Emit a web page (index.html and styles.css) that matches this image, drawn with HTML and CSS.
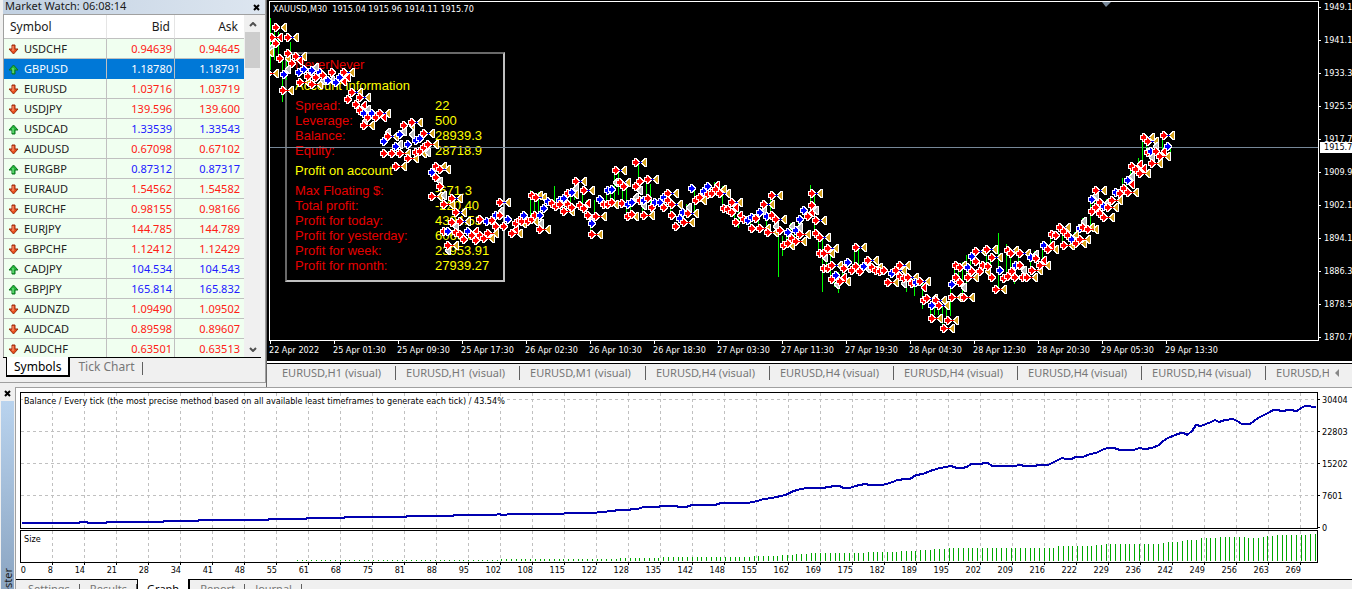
FILE: index.html
```html
<!DOCTYPE html>
<html lang="en">
<head>
    <meta charset="UTF-8">
    <meta name="viewport" content="width=device-width, initial-scale=1.0">
    <title>Strategy Tester</title>
    <link rel="stylesheet" href="styles.css">
</head>
<body>
    <svg class="defs" aria-hidden="true">
        <symbol id="arrow-down" viewBox="0 0 11 11">
            <path d="M4 1h3v4h3L5.500 10 1 5h3z" fill="#e8501e" stroke="#9c2a0c"/>
            <path d="M5 2v5" stroke="#ffa584"/>
        </symbol>
        <symbol id="arrow-up" viewBox="0 0 11 11">
            <path d="M4 10h3V6h3L5.500 1 1 6h3z" fill="#22b83a" stroke="#0b7420"/>
            <path d="M5 4v5" stroke="#8df09c"/>
        </symbol>
    </svg>

    <div class="workspace">
        <section class="market">
            <div class="market-title">
                <span>Market Watch: 06:08:14</span>
                <button type="button" class="close" aria-label="Close Market Watch"><svg viewBox="0 0 7 7"><path d="M1 1l5 5M6 1L1 6"/></svg></button>
            </div>
            <div class="market-body">
                <div class="quotes">
                    <table>
                        <thead>
                            <tr><th>Symbol</th><th>Bid</th><th>Ask</th></tr>
                        </thead>
                        <tbody id="quotes"></tbody>
                    </table>
                </div>
                <div class="scrollbar">
                    <svg viewBox="0 0 8 5"><path d="M1 4l3-3 3 3"/></svg>
                    <div class="thumb"></div>
                    <svg viewBox="0 0 8 5"><path d="M1 1l3 3 3-3"/></svg>
                </div>
            </div>
            <div class="tabs market-tabs">
                <button type="button" class="active">Symbols</button>
                <button type="button">Tick Chart</button>
            </div>
        </section>

        <section class="chart">
            <div class="chart-main">
                <div class="plot">
                    <div class="plot-title">XAUUSD,M30&nbsp; 1915.04 1915.96 1914.11 1915.70</div>
                    <div class="info">
                        <p class="name">NeverNever</p>
                        <p class="heading">Account information</p>
                        <dl>
                            <dt>Spread:</dt><dd>22</dd>
                            <dt>Leverage:</dt><dd>500</dd>
                            <dt>Balance:</dt><dd>28939.3</dd>
                            <dt>Equity:</dt><dd>28718.9</dd>
                        </dl>
                        <p class="heading">Profit on account</p>
                        <dl>
                            <dt>Max Floating $:</dt><dd>-671.3</dd>
                            <dt>Total profit:</dt><dd>-220.40</dd>
                            <dt>Profit for today:</dt><dd>4394.53</dd>
                            <dt>Profit for yesterday:</dt><dd>6066.58</dd>
                            <dt>Profit for week:</dt><dd>23953.91</dd>
                            <dt>Profit for month:</dt><dd>27939.27</dd>
                        </dl>
                    </div>
                    <svg id="trades" class="layer"></svg>
                </div>
                <div class="price-axis">
                    <span>1949.1</span><span>1941.1</span><span>1933.3</span><span>1925.5</span><span>1917.7</span><span>1909.9</span><span>1902.1</span><span>1894.1</span><span>1886.3</span><span>1878.5</span><span>1870.7</span>
                    <b>1915.7</b>
                </div>
            </div>
            <div class="time-axis" id="time-axis"></div>
            <div class="chart-tabs">
                <div class="tab-strip">
                    <button type="button">EURUSD,H1 (visual)</button>
                    <button type="button">EURUSD,H1 (visual)</button>
                    <button type="button">EURUSD,M1 (visual)</button>
                    <button type="button">EURUSD,H4 (visual)</button>
                    <button type="button">EURUSD,H4 (visual)</button>
                    <button type="button">EURUSD,H4 (visual)</button>
                    <button type="button">EURUSD,H4 (visual)</button>
                    <button type="button">EURUSD,H4 (visual)</button>
                    <button type="button">EURUSD,H4 (visual)</button>
                </div>
                <button type="button" class="scroll-left" aria-label="Scroll tabs left"><svg viewBox="0 0 4 8"><path d="M4 0v8L0 4z"/></svg></button>
            </div>
        </section>
    </div>

    <section class="tester">
        <div class="tester-side">
            <button type="button" class="close" aria-label="Close Tester"><svg viewBox="0 0 7 7"><path d="M1 1l5 5M6 1L1 6"/></svg></button>
            <div class="tester-name"><span>Tester</span></div>
        </div>
        <div class="tester-main">
            <div class="graph">
                <div class="graph-plots">
                    <div class="balance">
                        <svg id="balance"></svg>
                        <span class="graph-label">Balance / Every tick (the most precise method based on all available least timeframes to generate each tick) / 43.54%</span>
                    </div>
                    <div class="size">
                        <svg id="size"></svg>
                        <span class="graph-label">Size</span>
                    </div>
                    <div class="trade-axis" id="trade-axis"></div>
                </div>
                <div class="money-axis"><span>30404</span><span>22803</span><span>15202</span><span>7601</span><span>0</span></div>
            </div>
            <div class="tabs tester-tabs">
                <button type="button">Settings</button>
                <button type="button">Results</button>
                <button type="button" class="active">Graph</button>
                <button type="button">Report</button>
                <button type="button">Journal</button>
            </div>
        </div>
    </section>
    <script src="script.js"></script>
</body>
</html>
```
FILE: styles.css
```css
* {
    box-sizing: border-box;
}
body {
    margin: 0;
    height: 100vh;
    display: flex;
    flex-direction: column;
    overflow: hidden;
    background: #f0f0f0;
    color: #1a1a1a;
    font: 11px/14px "Noto Sans", "Open Sans", sans-serif;
}
button {
    margin: 0;
    padding: 0;
    border: 0;
    background: none;
    color: inherit;
    font: inherit;
    white-space: nowrap;
}
.defs {
    display: none;
}
.workspace {
    display: flex;
    height: 387px;
    flex: none;
}

/* market watch */
.market {
    width: 266px;
    height: 383px;
    flex: none;
    display: flex;
    flex-direction: column;
    padding-left: 3px;
    border-right: 1px solid #a0a0a0;
    border-bottom: 1px solid #a0a0a0;
}
.market-title {
    height: 14px;
    line-height: 11px;
    display: flex;
    justify-content: space-between;
    padding: 0 5px 0 2px;
    background: linear-gradient(90deg, #c2d1e2, #dde6f0);
}
.close svg {
    display: block;
    width: 7px;
    height: 7px;
    stroke: #000;
    stroke-width: 2;
}
.market-body {
    display: flex;
    height: 343px;
    border-top: 1px solid #a0a0a0;
    border-left: 1px solid #a0a0a0;
}
.quotes {
    width: 240px;
    overflow: hidden;
}
table {
    width: 100%;
    border-collapse: separate;
    border-spacing: 0;
    table-layout: fixed;
    background: #f0fff0;
}
th {
    height: 24px;
    padding: 0 6px;
    background: #fff;
    border-right: 1px solid #e5e5e5;
    border-bottom: 1px solid #c0c0c0;
    font-weight: normal;
    font-size: 12px;
    text-align: right;
}
th:first-child {
    width: 103px;
    text-align: left;
}
th:nth-child(2) {
    width: 68px;
    padding-right: 4px;
}
td {
    height: 20px;
    padding: 0 2px 0 4px;
    border-right: 1px solid #c0c0c0;
    border-bottom: 1px solid #c0c0c0;
    text-align: right;
}
td:first-child {
    text-align: left;
}
th:last-child,
td:last-child {
    border-right: 0;
}
td:last-child {
    padding-right: 4px;
}
td svg {
    width: 11px;
    height: 11px;
    margin-right: 5px;
    vertical-align: -2px;
}
.down td {
    color: #ff2015;
}
.up td {
    color: #2020ff;
}
.down td:first-child,
.up td:first-child {
    color: #222;
}
tr.selected td,
tr.selected td:first-child {
    background: #0078d7;
    border-bottom-color: #0078d7;
    color: #fff;
}
.scrollbar {
    width: 17px;
    display: flex;
    flex-direction: column;
    align-items: center;
    padding: 7px 0 5px;
}
.scrollbar svg {
    width: 8px;
    height: 5px;
    fill: none;
    stroke: #505050;
    stroke-width: 2;
}
.scrollbar .thumb {
    width: 15px;
    height: 36px;
    margin: 5px 0 auto;
    background: #cdcdcd;
}
.tabs {
    display: flex;
    border-top: 1px solid #000;
    color: #777;
}
.tabs button {
    height: 18px;
    padding: 0 10px;
    position: relative;
}
.tabs button:not(.active)::after {
    content: "";
    position: absolute;
    right: 0;
    top: 4px;
    height: 13px;
    border-right: 1px solid #606060;
}
.tabs .active {
    height: 20px;
    margin-top: -1px;
    padding: 1px 9px 0;
    background: #fff;
    border: 1px solid #000;
    border-top: 0;
    border-right-width: 2px;
    border-bottom-width: 2px;
    color: #000;
}
.market-tabs {
    margin-right: 4px;
    padding-left: 3px;
    font-size: 12px;
}
.market-tabs button {
    padding: 0 8px;
}
.market-tabs .active {
    padding: 1px 7px 0;
}

/* price chart */
.chart {
    flex: 1;
    min-width: 0;
    border-left: 1px solid #696969;
    background: #000;
    color: #fff;
    font: 9px/11px "DejaVu Sans Condensed", "DejaVu Sans", sans-serif;
}
.chart-main {
    display: flex;
    height: 341px;
    padding: 1px 0 0 2px;
}
.plot {
    position: relative;
    flex: 1;
    border: 1px solid #fff;
}
.plot-title {
    padding: 2px 0 0 3px;
}
.layer {
    position: absolute;
    left: 0;
    top: 0;
    width: 100%;
    height: 100%;
}
.info {
    position: absolute;
    left: 15px;
    top: 50px;
    width: 220px;
    height: 230px;
    padding: 3px 8px;
    border: 2px solid #c0c0c0;
    border-top-color: #696969;
    border-left-color: #696969;
    font: 13px/15px "Liberation Sans", Arial, sans-serif;
}
.info p {
    margin: 0 0 6px;
}
.info p.heading {
    margin-bottom: 5px;
    color: #ff0;
}
.info .name,
.info dt {
    color: #e60000;
}
.info dl {
    display: grid;
    grid-template-columns: 140px 1fr;
    margin: 0 0 5px;
}
.info dd {
    margin: 0;
    color: #ff0;
}
.price-axis {
    position: relative;
    width: 33px;
    display: flex;
    flex-direction: column;
    gap: 22px;
    padding-top: 1px;
    overflow: hidden;
}
.price-axis span {
    padding-left: 5px;
    background: linear-gradient(#fff, #fff) 0 5px / 2px 1px no-repeat;
}
.price-axis b {
    position: absolute;
    top: 141px;
    left: 1px;
    width: 100%;
    padding-left: 4px;
    background: #fff;
    color: #000;
    font-weight: normal;
}
.time-axis {
    display: flex;
    height: 20px;
    padding-left: 2px;
}
.time-axis span {
    width: 64px;
    flex: none;
    padding-top: 4px;
    white-space: nowrap;
    background: linear-gradient(#fff, #fff) 1px 0 / 1px 3px no-repeat;
}
.chart-tabs {
    display: flex;
    align-items: center;
    height: 26px;
    padding: 0 13px 4px 5px;
    border-top: 2px solid #fff;
    background: #f0f0f0;
    box-shadow: inset 0 1px #000;
    color: #777;
    font: 11px/14px "Noto Sans", "Open Sans", sans-serif;
}
.tab-strip {
    display: flex;
    flex: 1;
    overflow: hidden;
}
.tab-strip button {
    flex: none;
    padding: 0 14px 0 10px;
    border-right: 1px solid #606060;
}
.scroll-left svg {
    display: block;
    width: 4px;
    height: 8px;
    margin-left: 6px;
    fill: #888;
}

/* strategy tester */
.tester {
    flex: 1;
    min-height: 0;
    display: flex;
}
.tester-side {
    width: 15px;
    flex: none;
    display: flex;
    flex-direction: column;
    align-items: center;
    padding-top: 3px;
}
.tester-name {
    width: 13px;
    flex: 1;
    margin-top: 4px;
    padding-top: 167px;
    overflow: hidden;
    background: linear-gradient(#b9d3ee, #8ba5c2);
}
.tester-name span {
    writing-mode: vertical-rl;
    transform: rotate(180deg);
    line-height: 13px;
}
.tester-main {
    flex: 1;
    min-width: 0;
    border-top: 1px solid #a0a0a0;
    border-left: 1px solid #a0a0a0;
}
.graph {
    display: flex;
    height: 191px;
    padding: 4px 0 0 4px;
    background: #fff;
    color: #000;
    font: 9px/11px "DejaVu Sans Condensed", "DejaVu Sans", sans-serif;
}
.graph-plots {
    flex: 1;
    min-width: 0;
}
.balance,
.size {
    position: relative;
    border: 1px solid #000;
}
.balance {
    height: 137px;
}
.size {
    height: 33px;
    margin-top: 1px;
}
.graph-plots svg {
    display: block;
    width: 100%;
    height: 100%;
}
.graph-label {
    position: absolute;
    left: 2px;
    top: 3px;
    padding: 0 1px;
    background: #fff;
}
.trade-axis {
    display: flex;
    text-align: right;
}
.trade-axis span {
    width: 32px;
    flex: none;
    padding-top: 2px;
    background: linear-gradient(#000, #000) 100% 0 / 1px 2px no-repeat;
}
.trade-axis span:first-child {
    width: 6px;
    background: none;
}
.trade-axis span:nth-child(2) {
    width: 27px;
}
.money-axis {
    width: 34px;
    display: flex;
    flex-direction: column;
    gap: 21px;
    padding-top: 3px;
}
.money-axis span {
    padding-left: 4px;
    background: linear-gradient(#000, #000) 0 4px / 2px 1px no-repeat;
}
.tester-tabs {
    padding-left: 2px;
}
```
FILE: script.js
```js
const SVG_NS = 'http://www.w3.org/2000/svg';

const quotes = [
    ['USDCHF', '0.94639', '0.94645', 'down'],
    ['GBPUSD', '1.18780', '1.18791', 'up'],
    ['EURUSD', '1.03716', '1.03719', 'down'],
    ['USDJPY', '139.596', '139.600', 'down'],
    ['USDCAD', '1.33539', '1.33543', 'up'],
    ['AUDUSD', '0.67098', '0.67102', 'down'],
    ['EURGBP', '0.87312', '0.87317', 'up'],
    ['EURAUD', '1.54562', '1.54582', 'down'],
    ['EURCHF', '0.98155', '0.98166', 'down'],
    ['EURJPY', '144.785', '144.789', 'down'],
    ['GBPCHF', '1.12412', '1.12429', 'down'],
    ['CADJPY', '104.534', '104.543', 'up'],
    ['GBPJPY', '165.814', '165.832', 'up'],
    ['AUDNZD', '1.09490', '1.09502', 'down'],
    ['AUDCAD', '0.89598', '0.89607', 'down'],
    ['AUDCHF', '0.63501', '0.63513', 'down']
];

document.getElementById('quotes').innerHTML = quotes.map(([symbol, bid, ask, dir]) =>
    `<tr class="${dir}${symbol === 'GBPUSD' ? ' selected' : ''}">
        <td><svg><use href="#arrow-${dir}"/></svg>${symbol}</td><td>${bid}</td><td>${ask}</td>
    </tr>`).join('');

const times = ['22 Apr 2022', '25 Apr 01:30', '25 Apr 09:30', '25 Apr 17:30', '26 Apr 02:30',
    '26 Apr 10:30', '26 Apr 18:30', '27 Apr 03:30', '27 Apr 11:30', '27 Apr 19:30', '28 Apr 04:30',
    '28 Apr 12:30', '28 Apr 20:30', '29 Apr 05:30', '29 Apr 13:30'];
document.getElementById('time-axis').innerHTML = times.map(t => `<span>${t}</span>`).join('');

const tradeNumbers = [0, 8, 14, 21, 28, 34, 41, 48, 55, 61, 68, 75, 81, 88, 95, 102, 108, 115, 122,
    128, 135, 142, 148, 155, 162, 169, 175, 182, 189, 195, 202, 209, 216, 222, 229, 236, 242, 249,
    256, 263, 269];
document.getElementById('trade-axis').innerHTML = tradeNumbers.map(n => `<span>${n}</span>`).join('');

function add(parent, name, attrs) {
    const el = document.createElementNS(SVG_NS, name);
    for (const key in attrs) {
        el.setAttribute(key, attrs[key]);
    }
    parent.appendChild(el);
    return el;
}

// Chart origin, so that the data below can use workspace coordinates
function layer(id, x, y) {
    return add(document.getElementById(id), 'g', { transform: `translate(${-x} ${-y})` });
}

// r / b: sell and buy entry, g / s / l: exits,
// p / q: entry joined to its exit by a blue / red line
const trades = `
q272,37 r276,27 g284,27 l280,37 r276,43 s271,48 g271,52 p288,37 r280,58 g288,58 r288,53 p296,56 l300,60 r292,63
q268,73 b284,74 s288,69 q283,90 b299,72 b304,69 b312,70 q300,82 r308,76 s316,67 r316,77 b320,72 q312,84
r323,75 s323,80 b328,80 r332,72 s332,80 b336,82 b340,77 p344,72 l348,77 l344,81
p352,92 r348,99 p360,97 r356,104 l364,105 r360,110 s368,109 b364,113 b372,113 r368,117 r376,117 p380,113
l384,117 s365,121 q364,125 r404,125 p412,122 g412,125 s388,132 p388,136 b384,141 b400,134 s404,131 s412,134
b396,146 s400,144 b408,144 b416,140 b420,138 p424,133 q428,144 r384,153 r392,153 q400,153 r416,152 r420,151
r424,147 g424,153 s428,152 q408,158 q396,166
p436,166 p440,169 b432,172 r436,177 s440,181 r440,186 q432,196 s444,195 p452,198 q444,204 p456,212
r452,222 p460,221 s456,226 r444,231 b448,231 r456,232 r460,234 b468,231 r464,239 l476,231 r472,235
r476,240 r480,235 q484,238 q488,233 q448,245 s448,250 r480,219 b487,221 r492,220 b496,215 s501,211 r500,215
p500,202 r496,226 r504,226 b508,219 q512,233 r516,223 l516,229 r520,220 b524,215 g524,223
r522,221 q528,221 r532,195 g540,195 p536,197 r532,219 r535,215 b540,215 b544,208 s541,223 q540,229
b548,201 r552,203 r556,206 b560,200 r560,204 b564,198 q564,211 r568,193 r568,204 b572,192 r572,207
p576,181 s576,188 g576,194 p584,190 r580,205 r584,208 l588,203 r588,215 s592,219 b592,223 q596,216 q592,234
b600,199 r604,204 b608,190 r608,204 b612,189 r612,202 g616,204 s616,182 p616,170 p620,182 r624,186
r622,203 b628,204 r628,216 b632,202 r632,214 g636,216 p636,162 r636,186 r640,181 s640,190 s636,197
r640,200 q644,215 p648,179 b644,200 s644,205 r648,198 r652,207 b655,202 b660,202 b664,197 r664,207
p668,193 r668,200 p672,204 r672,215 r676,226 b680,218 b683,212 q684,222 s689,207 p688,213
b692,188 r696,200 r700,197 g704,200 b704,191 b708,186 r708,194 r712,193 r716,189 l717,185 g724,189 p720,193
r724,208 r728,209 p732,202 l736,207 r732,212 r736,222 l740,215 r744,219 b748,220 b752,217 r752,228
r756,218 b760,212 q760,228 p764,204 s764,211 b767,216 p772,195 r772,215 q768,232 p776,219 s776,226 r780,230
b788,232 s792,226 q784,245 r788,243 r792,238 b796,230 q796,241 q800,234
b800,219 s800,227 b804,210 r808,216 r812,205 p812,193 l812,212 s816,210 p816,220 r816,233 p820,237
r820,253 q824,253 s825,257 p828,248 r824,268 r828,268 p832,265 r832,279 b836,275 s837,284 q840,281 l844,277
r844,268 b848,262 r852,270 p856,247 r856,266 r860,271 b864,266 p868,260 s868,268 r872,267 r876,270
g880,267 r880,271 r884,270 b892,273 q888,282 p896,270 p900,265 r900,276 r904,278 s904,283 p908,277
r912,283 b916,282 p920,281 l924,287 r924,300 p927,298 b932,305 p936,300 p939,305 q932,318 q944,328 q948,320
q952,297 b952,284 r956,277 g964,265 r956,265 r960,267 r960,282 s964,287 q964,297 q968,277 b968,267 r972,271
b972,256 p976,251 r976,261 r980,271 g988,271 r983,265 p987,249 r988,266 p992,257 r992,277 q996,289 b1000,270 r1004,278
p1008,250 r1011,253 r1008,276 r1012,271 r1015,277 p1020,253 b1016,265 r1020,265 s1024,270 r1023,277 q1027,277
b1031,257 s1036,254 r1036,258 q1032,270 l1044,260 q1040,265 b1044,245 q1048,249 l1052,245 r1052,234
r1056,235 p1060,227 r1064,231 r1068,235 q1064,245 b1072,239 q1076,243 g1076,235 q1080,239 b1080,228
s1084,221 r1083,227 g1092,227 q1088,229 r1092,211 b1092,199 s1096,195 p1096,190 r1096,207 r1100,202 r1100,213
b1104,206 q1104,217 s1108,202 q1108,207 q1112,200 b1116,192 r1120,193 r1124,188 b1128,180 q1128,192
l1132,184 s1132,176 r1132,166 r1136,169 l1140,164 l1144,168 q1140,173 p1144,137 p1148,141 r1148,152
b1151,151 s1152,157 q1152,163 s1156,146 r1156,151 q1160,156 p1164,135 l1164,151 b1168,146`;

const wicks = [
    [270, 18, 70], [274, 28, 60], [278, 32, 56], [282, 60, 102], [286, 60, 80], [290, 42, 60],
    [530, 190, 216], [534, 196, 216], [554, 186, 210], [574, 178, 200], [594, 200, 226], [614, 176, 200],
    [618, 168, 195], [626, 186, 214], [638, 160, 200], [650, 184, 208], [694, 186, 216], [738, 208, 228],
    [778, 222, 277], [782, 236, 256], [810, 185, 210], [814, 194, 222], [822, 236, 292], [830, 250, 262],
    [838, 272, 293], [854, 250, 270], [858, 248, 270], [906, 272, 292], [914, 276, 296], [922, 284, 309],
    [934, 300, 315], [938, 302, 315], [942, 306, 325], [946, 304, 322], [950, 282, 316], [966, 255, 292],
    [998, 233, 288], [1006, 244, 262], [1010, 252, 276], [1014, 262, 284], [1030, 255, 275], [1090, 195, 228],
    [1122, 178, 190], [1138, 158, 172], [1142, 138, 165], [1162, 138, 155], [1170, 148, 154]
];

const colors = { r: '#f00', b: '#00f', g: '#daa520', s: '#c0c0c0', l: '#f00' };
const ENTRY = 'M-3-1h2v-2h1v1h1v1h1v1h1v1h-1v1h-1v1h-1v1h-1v-2h-2z';
const EXIT = 'M-2 0h1v-1h1v-1h1v-1h1v7h-1v-1h-1v-1h-1v-1h-1z';

function mark(g, type, x, y) {
    add(g, 'path', {
        d: type === 'r' || type === 'b' ? ENTRY : EXIT,
        transform: `translate(${x} ${y})`,
        fill: colors[type],
        stroke: '#fff',
        'stroke-width': 2,
        'paint-order': 'stroke',
        'shape-rendering': 'crispEdges'
    });
}

function drawTrades() {
    const g = layer('trades', 270, 2);
    add(g, 'path', { d: 'M270 147.5H4000', stroke: '#778899' });
    add(g, 'path', { d: 'M1102 2h9l-5 5z', fill: '#778899' });

    const list = trades.trim().split(/\s+/).map(item => {
        const [x, y] = item.slice(1).split(',').map(Number);
        return { type: item[0], x, y };
    });

    // price bars behind the marks
    const columns = {};
    list.forEach(({ x, y }) => {
        const col = Math.round(x / 4) * 4 - 2;
        columns[col] = columns[col] || [y, y];
        columns[col] = [Math.min(columns[col][0], y), Math.max(columns[col][1], y)];
    });
    for (const col in columns) {
        const [top, bottom] = columns[col];
        if (bottom - top < 50 && col > 520) {
            add(g, 'path', { d: `M${+col + 0.5} ${top - 3}V${bottom + 3}`, stroke: '#0f0' });
        }
    }
    wicks.forEach(([x, top, bottom]) => {
        add(g, 'path', { d: `M${x + 0.5} ${top}V${bottom}`, stroke: '#0f0' });
    });

    // exits first, entries over them
    list.sort((a, b) => a.x - b.x);
    list.forEach(({ type, x, y }) => {
        if (type === 'p' || type === 'q') {
            mark(g, 'g', x + 8, y);
        } else if (!'rb'.includes(type)) {
            mark(g, type, x, y);
        }
    });
    list.forEach(({ type, x, y }) => {
        if ('rbpq'.includes(type)) {
            mark(g, type === 'b' ? 'b' : 'r', x, y);
        }
        if (type === 'p' || type === 'q') {
            add(g, 'path', { d: `M${x + 3} ${y + 0.5}h3`, stroke: type === 'p' ? '#00f' : '#f00' });
        }
    });
}

const balance = `22,523 79,523 80,522 87,522 88,523 106,523 107,522 163,522 164,521 198,521 199,520 268,520
269,519 306,519 307,518 344,518 345,517 406,517 407,516 453,516 454,515 496,515 498,514 503,515 512,514 563,514
565,513 596,513 598,512 606,512 608,511 614,511 617,510 629,510 632,509 638,509 643,507 658,507 661,506 676,506
679,507 686,507 692,505 715,505 721,503 748,503 757,501 764,499 772,498 785,495 788,494 791,492 797,490 806,488
823,488 828,487 835,486 840,486 843,488 850,488 855,486 865,484 870,485 882,485 886,484 893,482 897,480 900,480
903,479 910,479 916,475 923,474 930,471 940,468 951,466 957,468 962,468 967,467 971,464 981,464 984,463 988,463
992,466 1014,466 1020,465 1025,466 1035,466 1038,465 1048,465 1056,461 1062,458 1066,459 1072,459 1075,457
1083,457 1090,454 1096,453 1104,449 1108,448 1114,448 1120,450 1134,450 1139,448 1145,449 1152,448 1159,445
1163,441 1168,438 1175,435 1181,433 1184,433 1187,435 1192,431 1196,425 1201,426 1206,424 1211,422 1215,420
1219,422 1225,420 1233,419 1237,421 1242,424 1250,424 1258,418 1264,415 1270,412 1273,410 1278,410 1281,411
1290,410 1297,411 1301,408 1305,406 1310,406 1312,407 1316,407`;

function drawGrid(g, top, bottom) {
    for (let x = 52; x <= 1300; x += 32) {
        add(g, 'path', { d: `M${x + 0.5} ${top}V${bottom}`, stroke: '#c0c0c0', 'stroke-dasharray': '3 3' });
    }
}

function drawBalance() {
    const g = layer('balance', 21, 393);
    drawGrid(g, 393, 528);
    [399, 431, 463, 495].forEach(y => {
        add(g, 'path', { d: `M21 ${y + 0.5}H4000`, stroke: '#c0c0c0', 'stroke-dasharray': '3 3' });
    });
    add(g, 'polyline', {
        points: balance, fill: 'none', stroke: '#0000b0', 'stroke-width': 2, 'shape-rendering': 'crispEdges'
    });
}

// [first x, bar height]
const lots = [[296, 1], [500, 2], [619, 3], [662, 4], [750, 5], [781, 6], [795, 7], [809, 8], [866, 9],
    [898, 10], [919, 11], [932, 12], [946, 13], [1056, 15], [1094, 16], [1104, 17], [1161, 18], [1166, 19],
    [1178, 20], [1185, 21], [1198, 23], [1217, 24], [1246, 23], [1262, 24], [1266, 25], [1275, 26], [1308, 27]];

function drawSize() {
    const g = layer('size', 21, 531);
    drawGrid(g, 531, 562);
    for (let n = 58; n <= 272; n++) {
        const x = Math.round(21 + n * 1294 / 272);
        const height = lots.filter(lot => lot[0] <= x).pop()[1];
        add(g, 'path', { d: `M${x + 0.5} 561v${-height}`, stroke: '#00a800' });
    }
}

drawTrades();
drawBalance();
drawSize();
```
